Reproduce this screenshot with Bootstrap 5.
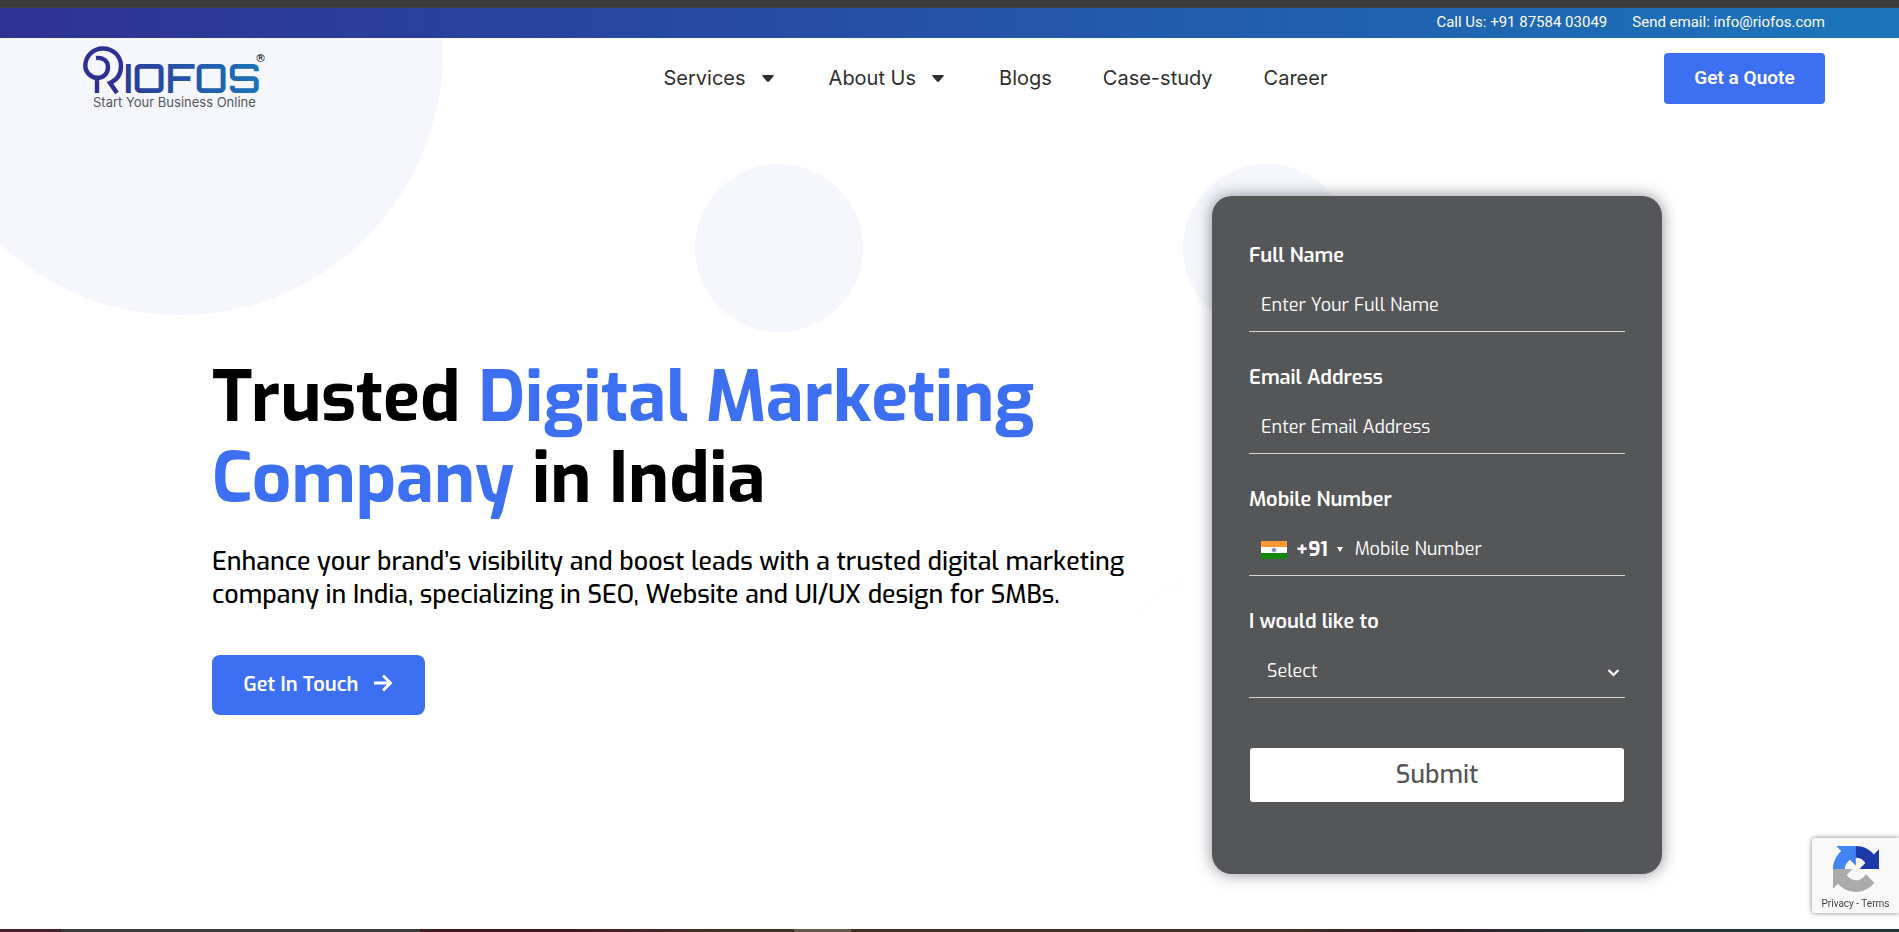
<!DOCTYPE html>
<html lang="en">
<head>
<meta charset="utf-8">
<meta name="viewport" content="width=device-width, initial-scale=1">
<title>Riofos - Digital Marketing Company in India</title>
<link href="https://cdn.jsdelivr.net/npm/bootstrap@5.3.0/dist/css/bootstrap.min.css" rel="stylesheet">
<style>
  body { font-family: Exo, Roboto, sans-serif; color: #000; background: #fff; overflow-x: hidden; }
  .edge-top { height: 8px; background: linear-gradient(#3a3a3a 75%, #454545); }
  .contact-bar { height: 30px; padding: 0 74px 2px; gap: 25px; font: 400 15px/22px Roboto, sans-serif; background: linear-gradient(90deg, #2e3192, #1b75bb); }
  .edge-bottom { height: 3px; background: linear-gradient(90deg, #4a1f2c 3.2%, #3a3c3a 3.2%, #3a3c3a 22.1%, #451822 22.1%, #451822 30%, #463222 38%, #463222 41.8%, #6a574a 41.8%, #6a574a 44.8%, #463020 44.8%, #463020 68%, #38181f 74%, #21343a 83%); }
  .page-body { overflow: hidden; }
  .backdrop { top: 0; left: 0; width: 1899px; height: 600px; }
  .site-header { padding: 8px 74px 7px 83px; }
  .main-menu { gap: 51px; padding-left: 60px; font: 400 20px/30px Inter, sans-serif; }
  .main-menu a { color: #2f2f2f; text-decoration: none; }
  .main-menu .has-sub { gap: 16px; padding-right: 4px; }
  .btn-brand { --bs-btn-bg: #3d6ff3; --bs-btn-color: #fff; --bs-btn-border-width: 0; --bs-btn-hover-bg: #2f5fe0; --bs-btn-hover-color: #fff; }
  .btn-quote { --bs-btn-border-radius: 4px; width: 161px; height: 51px; font: 600 19px/24px Roboto, sans-serif; }
  .hero { padding: 79px 237px 55px 212px; gap: 60px; }
  .hero h1 { font-size: 69px; line-height: 81px; font-weight: 700; padding-top: 2px; margin-bottom: 25px; }
  .hero h1 span { color: #3d6ff3; }
  .hero p { font-size: 25px; line-height: 33px; font-weight: 500; margin-bottom: 44px; }
  .btn-touch { --bs-btn-border-radius: 8px; width: 213px; height: 60px; gap: 16px; font-size: 20px; font-weight: 600; }
  .btn-touch svg { margin-bottom: 4px; }
  .enquiry { width: 450px; flex: none; padding: 47px 37px 72px; border-radius: 20px; background: #555658; color: #fff; box-shadow: 0 0 16px rgba(30, 30, 50, .5); }
  .field { margin-bottom: 33px; }
  .field .form-label { display: block; margin-bottom: 13px; font-size: 20px; line-height: 26px; font-weight: 600; }
  .field-line { height: 50px; border-bottom: 1px solid #d5d5d5; }
  .field .form-control, .field .form-select { height: 48px; padding: 0 12px 2px; border: 0; border-radius: 0; font-size: 18px; color: #fff; background-color: transparent; box-shadow: none; }
  .field .form-control::placeholder { color: #fff; opacity: 1; }
  .field .form-select { padding-left: 18px; background-position: right 5px center; background-size: 13px 13px; background-image: url("data:image/svg+xml,%3Csvg xmlns='http://www.w3.org/2000/svg' viewBox='0 0 13 13'%3E%3Cpath d='M1.500 4l5 5 5-5' fill='none' stroke='%23fff' stroke-width='2.200'/%3E%3C/svg%3E"); }
  .field .form-select option { color: #000; }
  .dial-code { padding: 0 0 2px 12px; border: 0; background: none; color: #fff; gap: 9px; font-size: 20px; font-weight: 700; }
  .btn-send { display: block; width: calc(100% - 2px); height: 54px; margin: 50px auto 0; border: 0; border-radius: 3px; background: #fff; color: #555658; font-size: 25px; font-weight: 500; line-height: 30px; }
  .captcha { right: 0; bottom: 19px; width: 87px; height: 75px; padding-top: 8px; background: #f9f9f9; border-radius: 3px 0 0 3px; box-shadow: 0 0 5px #808080; font: 400 10px/14px Roboto, sans-serif; color: #444; }
  .captcha a { color: #444; text-decoration: none; }
  .captcha svg { display: block; margin: 0 auto 5px 21px; }
  @media (max-width: 1700px) {
    .hero { padding-left: 40px; padding-right: 40px; }
    .main-menu { gap: 24px; padding-left: 0; }
  }
  @media (max-width: 1200px) {
    .hero, .site-header { flex-wrap: wrap; }
    .hero h1 { font-size: 48px; line-height: 56px; }
  }
</style>
</head>
<body>
<div class="d-flex flex-column min-vh-100">
  <div class="edge-top"></div>
  <div class="contact-bar d-flex justify-content-end align-items-center">
    <a class="text-white text-decoration-none" href="tel:+918758403049">Call Us: +91 87584 03049</a>
    <a class="text-white text-decoration-none" href="mailto:info@riofos.com">Send email: info@riofos.com</a>
  </div>

  <div class="page-body position-relative flex-grow-1">
    <svg class="backdrop position-absolute" viewBox="0 0 1899 600" aria-hidden="true">
      <g fill="#f5f7fc">
        <circle cx="180" cy="14" r="263"/>
        <circle cx="779" cy="210" r="84"/>
        <circle cx="1267" cy="210" r="84"/>
      </g>
      <path d="M1138 575C1150 561 1166 549 1184 545" fill="none" stroke="#fdfdfe" stroke-width="3"/>
    </svg>

    <header class="site-header d-flex align-items-center position-relative">
      <a class="site-logo" href="#">
        <svg class="d-block" width="184" height="64" viewBox="0 0 184 64" role="img" aria-label="Riofos">
          <defs><linearGradient id="brand" gradientUnits="userSpaceOnUse" x1="20" x2="180" y1="0" y2="0"><stop offset="0" stop-color="#2e3192"/><stop offset="1" stop-color="#1b75bb"/></linearGradient></defs>
          <g fill="none" stroke="#2e3192" stroke-width="4.400">
            <path d="M14 32C7 31 2.300 26 2.300 20C2.300 10 10 2.500 20 2.500S38 10 38 20C38 28 34 34 27 37L34 47"/>
            <path d="M13 12C20 11 25 15 25 21C25 28 20 32 14 32V47"/>
          </g>
          <text x="41" y="47" font-family="Orbitron, DejaVu Sans, sans-serif" font-weight="600" font-size="40" fill="url(#brand)">IOFOS</text>
          <text x="172" y="16" font-family="DejaVu Sans, sans-serif" font-size="11" fill="#000">®</text>
          <text x="10" y="61" font-family="Inter, sans-serif" font-size="13" fill="#555658">Start Your Business Online</text>
        </svg>
      </a>
      <nav class="main-menu d-flex align-items-center mx-auto">
        <a class="has-sub d-flex align-items-center" href="#">Services <svg width="12" height="7" viewBox="0 0 12 7"><path d="M1 0h10q1.400 0 .5 1.200L7 6.500q-1 .9-2 0L.5 1.200Q-.4 0 1 0" fill="#2f2f2f"/></svg></a>
        <a class="has-sub d-flex align-items-center" href="#">About Us <svg width="12" height="7" viewBox="0 0 12 7"><path d="M1 0h10q1.400 0 .5 1.200L7 6.500q-1 .9-2 0L.5 1.200Q-.4 0 1 0" fill="#2f2f2f"/></svg></a>
        <a href="#">Blogs</a>
        <a href="#">Case-study</a>
        <a href="#">Career</a>
      </nav>
      <button type="button" class="btn btn-brand btn-quote p-0">Get a Quote</button>
    </header>

    <main class="hero d-flex align-items-center position-relative">
      <section class="flex-grow-1">
        <h1>Trusted <span>Digital Marketing Company</span> in India</h1>
        <p>Enhance your brand’s visibility and boost leads with a trusted digital marketing company in India, specializing in SEO, Website and UI/UX design for SMBs.</p>
        <button type="button" class="btn btn-brand btn-touch d-flex align-items-center justify-content-center p-0">Get In Touch
          <svg width="19" height="18" viewBox="0 0 19 18" fill="none" stroke="#fff" stroke-width="2.800"><path d="M0 9h16M9 1.500L16.500 9 9 16.500"/></svg>
        </button>
      </section>

      <form class="enquiry">
        <div class="field">
          <label class="form-label" for="name">Full Name</label>
          <div class="field-line"><input class="form-control" id="name" type="text" placeholder="Enter Your Full Name"></div>
        </div>
        <div class="field">
          <label class="form-label" for="email">Email Address</label>
          <div class="field-line"><input class="form-control" id="email" type="email" placeholder="Enter Email Address"></div>
        </div>
        <div class="field">
          <label class="form-label" for="mobile">Mobile Number</label>
          <div class="field-line d-flex">
            <button type="button" class="dial-code d-flex align-items-center">
              <svg width="26" height="18" viewBox="0 0 26 18"><path fill="#fff" d="M0 0h26v18H0z"/><path fill="#ff9933" d="M0 0h26v6H0z"/><path fill="#138808" d="M0 12h26v6H0z"/><circle cx="13" cy="9" r="2" fill="#8080c8" stroke="#a0a0d8"/></svg>
              <span>+91</span>
              <svg width="6" height="5" viewBox="0 0 6 5"><path d="M0 0h6L3 5z" fill="#fff"/></svg>
            </button>
            <input class="form-control" id="mobile" type="tel" placeholder="Mobile Number">
          </div>
        </div>
        <div class="field">
          <label class="form-label" for="need">I would like to</label>
          <div class="field-line"><select class="form-select" id="need"><option>Select</option></select></div>
        </div>
        <button type="submit" class="btn-send">Submit</button>
      </form>
    </main>
  </div>
  <div class="edge-bottom"></div>
</div>

<aside class="captcha position-fixed text-center">
  <svg width="46" height="46" viewBox="0 0 64 64" aria-hidden="true">
    <path fill="#1c3aa9" d="M64 31.955l-.033-1.370V4.687l-7.160 7.160C50.948 4.674 42.033.093 32.050.093c-10.400 0-19.622 4.960-25.458 12.640l11.736 11.860a15.550 15.550 0 0 1 4.754-5.334c2.050-1.600 4.952-2.906 8.968-2.906.485 0 .860.057 1.135.163 4.976.393 9.288 3.140 11.828 7.124l-8.307 8.307L64 31.953"/>
    <path fill="#4285f4" d="M31.862.094l-1.370.033H4.594l7.160 7.160C4.580 13.147 0 22.060 0 32.046c0 10.400 4.960 19.622 12.640 25.458L24.500 45.768a15.550 15.550 0 0 1-5.334-4.754c-1.600-2.050-2.906-4.952-2.906-8.968 0-.485.057-.860.163-1.135.393-4.976 3.140-9.288 7.124-11.828l8.307 8.307L31.860.095"/>
    <path fill="#ababab" d="M.001 32.045l.033 1.370v25.898l7.160-7.160c5.860 7.173 14.774 11.754 24.760 11.754 10.400 0 19.622-4.960 25.458-12.640l-11.736-11.860a15.550 15.550 0 0 1-4.754 5.334c-2.050 1.600-4.952 2.906-8.968 2.906-.485 0-.860-.057-1.135-.163-4.976-.393-9.288-3.140-11.828-7.124l8.307-8.307c-10.522.040-22.400.066-27.295-.005"/>
  </svg>
  <a href="#">Privacy</a> - <a href="#">Terms</a>
</aside>
<script src="https://cdn.jsdelivr.net/npm/bootstrap@5.3.0/dist/js/bootstrap.bundle.min.js"></script>
</body>
</html>
